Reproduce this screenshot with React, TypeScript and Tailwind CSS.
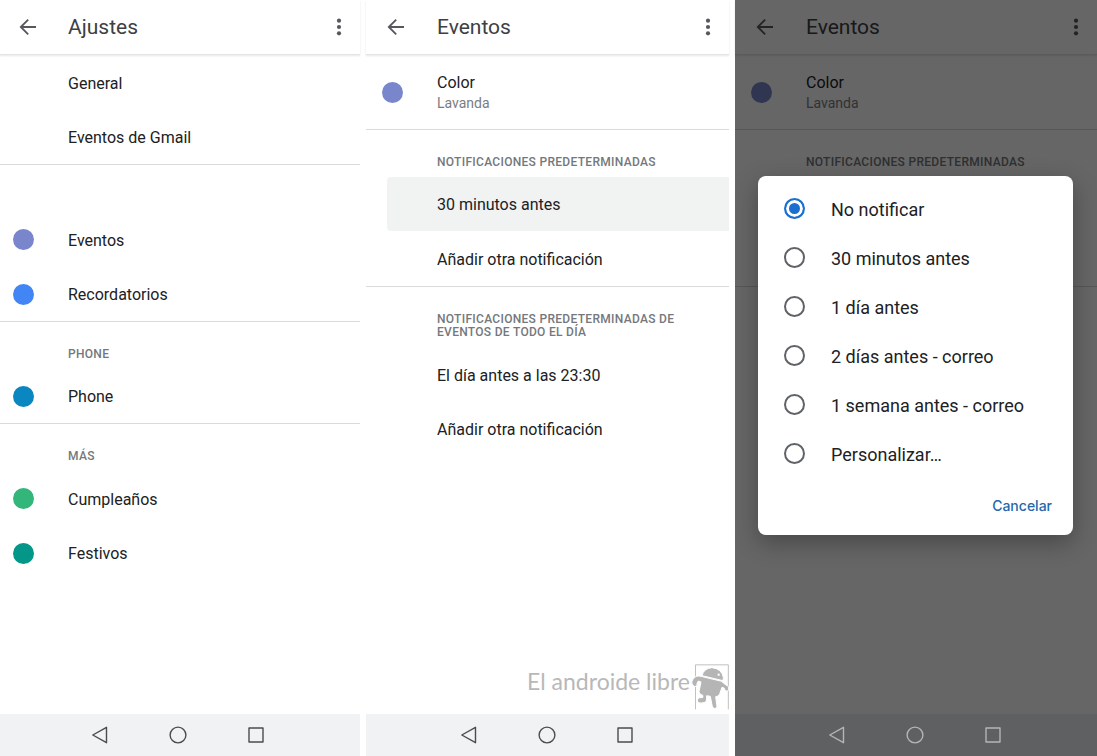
import { useState, type ReactNode } from "react";

function BackIcon() {
  return (
    <svg viewBox="0 0 18 18" className="size-[18px]" fill="none" stroke="currentColor" strokeWidth="1.8">
      <path d="M17 9H2M9.2 1.6 1.8 9l7.4 7.4" />
    </svg>
  );
}

function MoreIcon() {
  return (
    <svg viewBox="0 0 6 18" className="h-[18px] w-1.5" fill="currentColor">
      <circle cx="3" cy="2.7" r="2.1" />
      <circle cx="3" cy="9" r="2.1" />
      <circle cx="3" cy="15.3" r="2.1" />
    </svg>
  );
}

function TopBar({ title, lead }: { title: string; lead: string }) {
  return (
    <header className="flex h-[55px] shrink-0 items-center border-b border-[#e4e4e4] pr-[18px] pb-px shadow-[0_1px_2px_rgba(0,0,0,0.1)]">
      <div className={`${lead} flex shrink-0 justify-center text-[#55585c]`}>
        <button type="button" aria-label="Atrás" className="mr-3">
          <BackIcon />
        </button>
      </div>
      <h1 className="flex-1 text-[21px] leading-6 text-[#3c4043]">{title}</h1>
      <button type="button" aria-label="Más opciones" className="text-[#55585c]">
        <MoreIcon />
      </button>
    </header>
  );
}

function Lead({ lead, dot }: { lead: string; dot?: string }) {
  return (
    <span className={`${lead} flex shrink-0 justify-end`}>
      {dot && <span className={`${dot} mr-[34px] size-[21px] rounded-full`} />}
    </span>
  );
}

function Row({ lead, dot, children }: { lead: string; dot?: string; children: ReactNode }) {
  return (
    <button type="button" className="flex h-[55px] w-full items-center text-left text-base text-[#202124] last:h-[54px]">
      <Lead lead={lead} dot={dot} />
      <span className="pt-0.5">{children}</span>
    </button>
  );
}

function Group({ children }: { children: ReactNode }) {
  return <section className="border-b border-[#d8dadb] last:border-b-0">{children}</section>;
}

function Label({ inset, children }: { inset: string; children?: ReactNode }) {
  return (
    <h2 className={`${inset} pt-[26px] pr-10 pb-2 text-xs leading-[13px] font-medium tracking-wide text-[#74787c] uppercase`}>
      {children}
    </h2>
  );
}

function ColorRow() {
  return (
    <button type="button" className="flex h-[74px] w-full items-center text-left">
      <Lead lead="w-[71px]" dot="bg-[#7986cb]" />
      <span className="flex flex-col pt-0.5">
        <span className="text-base leading-5 text-[#202124]">Color</span>
        <span className="text-sm leading-5 text-[#7a7d80]">Lavanda</span>
      </span>
    </button>
  );
}

function NavBar({ tone }: { tone: string }) {
  return (
    <nav className={`${tone} flex h-[42px] shrink-0 items-center justify-center gap-[60px]`}>
      <button type="button" aria-label="Volver">
        <svg viewBox="0 0 18 18" className="size-[18px]" fill="none" stroke="currentColor" strokeWidth="1.4" strokeLinejoin="round">
          <path d="M15.5 1.3v15.4L1.8 9z" />
        </svg>
      </button>
      <button type="button" aria-label="Inicio">
        <svg viewBox="0 0 18 18" className="size-[18px]" fill="none" stroke="currentColor" strokeWidth="1.4">
          <circle cx="9" cy="9" r="7.9" />
        </svg>
      </button>
      <button type="button" aria-label="Recientes">
        <svg viewBox="0 0 18 18" className="size-[18px]" fill="none" stroke="currentColor" strokeWidth="1.4" strokeLinejoin="round">
          <rect x="2" y="2" width="14" height="14" />
        </svg>
      </button>
    </nav>
  );
}

function RobotLogo() {
  return (
    <svg viewBox="31 26 117 138" className="h-[46px] w-[39px]">
      <path d="M47.500 162V28.500H146V162" fill="none" stroke="#b5b5b5" strokeWidth="2.500" />
      <g fill="#b5b5b5" stroke="#fff" strokeWidth="3" strokeLinejoin="round">
        <path d="M64 63 Q47 59 40 72 L36 80 Q36 91 46 94 Q55 92 52 84 L56 77 L64 80 L58 109 Q58 116 66 118 L70 121 L69 127 L60 127 Q52 129 53 137 Q57 145 66 143 L77 141 Q82 137 81 121 L92 123 L97 149 Q99 161 108 159 Q114 156 111 147 L108 124 Q117 124 120 116 L127 96 L133 98 L136 105 Q142 110 147 105 V94 L131 83 L126 78 Z" />
        <path d="M67 61 Q72 39 97 37 Q126 40 131 66 L130 76 Z" />
      </g>
      <circle cx="117" cy="58" r="3.500" fill="#fff" />
    </svg>
  );
}

const options = [
  "No notificar",
  "30 minutos antes",
  "1 día antes",
  "2 días antes - correo",
  "1 semana antes - correo",
  "Personalizar…",
];

function ReminderDialog() {
  const [selected, setSelected] = useState(options[0]);
  return (
    <div className="absolute inset-0 flex items-center bg-black/60 pr-6 pb-[3px] pl-[23px]">
      <div role="dialog" aria-label="Notificación" className="flex-1 rounded-lg bg-white pt-2 pb-[13px] shadow-[0_8px_24px_rgba(0,0,0,0.3)]">
        {options.map((option) => (
          <label key={option} className="flex h-[49px] items-center pl-[26px] text-lg text-[#202124]">
            <input
              type="radio"
              name="reminder"
              checked={selected === option}
              onChange={() => setSelected(option)}
              className="mr-[26px] size-[21px] shrink-0 appearance-none rounded-full border-2 border-[#5f6368] checked:border-[#1a6fd0] checked:bg-[#1a6fd0] checked:shadow-[inset_0_0_0_3px_white]"
            />
            <span className="pt-0.5">{option}</span>
          </label>
        ))}
        <div className="flex h-11 items-center justify-end pt-3 pr-[21px]">
          <button type="button" className="font-['Inter',sans-serif] text-sm font-medium text-[#2468ad]">
            Cancelar
          </button>
        </div>
      </div>
    </div>
  );
}

export default function App() {
  return (
    <div className="grid min-h-screen grid-cols-[360fr_363fr_362fr] gap-x-1.5 bg-white font-['Roboto',sans-serif]">
      <div className="flex flex-col">
        <TopBar title="Ajustes" lead="w-[68px]" />
        <main className="flex-1">
          <Group>
            <Row lead="w-[68px]">General</Row>
            <Row lead="w-[68px]">Eventos de Gmail</Row>
          </Group>
          <Group>
            <div className="h-[47px]" />
            <Row lead="w-[68px]" dot="bg-[#7986cb]">Eventos</Row>
            <Row lead="w-[68px]" dot="bg-[#4285f4]">Recordatorios</Row>
          </Group>
          <Group>
            <Label inset="pl-[68px]">Phone</Label>
            <Row lead="w-[68px]" dot="bg-[#0a86c0]">Phone</Row>
          </Group>
          <Group>
            <Label inset="pl-[68px]">Más</Label>
            <Row lead="w-[68px]" dot="bg-[#33b679]">Cumpleaños</Row>
            <Row lead="w-[68px]" dot="bg-[#049688]">Festivos</Row>
          </Group>
        </main>
        <NavBar tone="bg-[#f1f2f4] pr-1 text-[#4a4c4f]" />
      </div>

      <div className="flex flex-col">
        <TopBar title="Eventos" lead="w-[71px]" />
        <main className="flex flex-1 flex-col">
          <Group>
            <ColorRow />
          </Group>
          <Group>
            <Label inset="pl-[71px]">Notificaciones predeterminadas</Label>
            <div className="mb-px ml-[21px] rounded-l bg-[#f1f3f3]">
              <Row lead="w-[50px]">30 minutos antes</Row>
            </div>
            <Row lead="w-[71px]">Añadir otra notificación</Row>
          </Group>
          <section>
            <Label inset="pl-[71px]">Notificaciones predeterminadas de eventos de todo el día</Label>
            <Row lead="w-[71px]">El día antes a las 23:30</Row>
            <Row lead="w-[71px]">Añadir otra notificación</Row>
          </section>
          <div className="mt-auto mb-1 flex items-start justify-end">
            <span className="pt-px font-['Lato',sans-serif] text-[23px] leading-8 text-[#b8b8b8]">El androide libre</span>
            <RobotLogo />
          </div>
        </main>
        <NavBar tone="bg-[#f1f2f4] pr-0.5 text-[#4a4c4f]" />
      </div>

      <div className="flex flex-col">
        <div className="relative flex-1">
          <TopBar title="Eventos" lead="w-[71px]" />
          <main>
            <Group>
              <ColorRow />
            </Group>
            <Group>
              <Label inset="pl-[71px]">Notificaciones predeterminadas</Label>
              <div className="h-[109px]" />
            </Group>
            <div />
          </main>
          <ReminderDialog />
        </div>
        <NavBar tone="bg-[#5f6062] pr-0.5 text-[#b4b5b6]" />
      </div>
    </div>
  );
}
